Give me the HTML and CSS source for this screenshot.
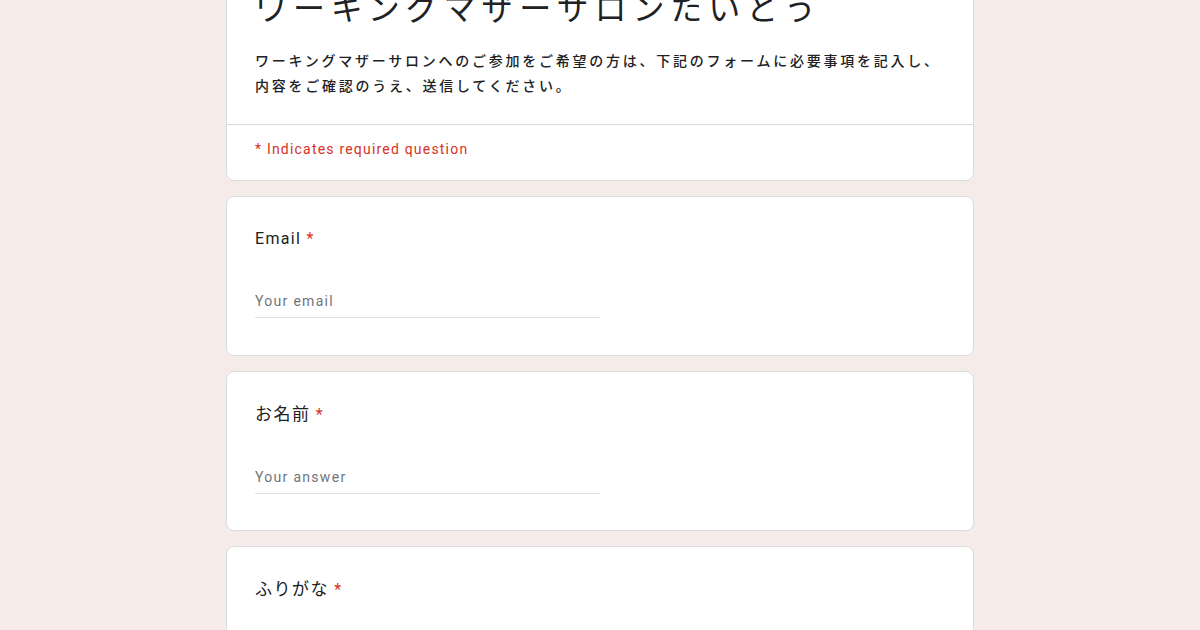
FILE: index.html
```html
<!DOCTYPE html>
<html lang="ja">
<head>
<meta charset="utf-8">
<title>ワーキングマザーサロンたいとう</title>
<link rel="stylesheet" href="styles.css">
</head>
<body>
<main class="form">
  <section class="card header-card">
    <div class="header-main">
      <h1 class="title">ワーキングマザーサロンたいとう</h1>
      <p class="desc">ワーキングマザーサロンへのご参加をご希望の方は、下記のフォームに必要事項を記入し、<br>内容をご確認のうえ、送信してください。</p>
    </div>
    <div class="required-note">* Indicates required question</div>
  </section>

  <section class="card question">
    <div class="q-label">Email <span class="star">*</span></div>
    <div class="q-input">Your email</div>
  </section>

  <section class="card question">
    <div class="q-label jp">お名前 <span class="star">*</span></div>
    <div class="q-input">Your answer</div>
  </section>

  <section class="card question">
    <div class="q-label jp">ふりがな <span class="star">*</span></div>
    <div class="q-input">Your answer</div>
  </section>
</main>
</body>
</html>
```

FILE: styles.css
```css
html, body {
  margin: 0;
  padding: 0;
}
body {
  background: #f5ebe8;
  font-family: Roboto, "Noto Sans CJK JP", sans-serif;
  color: #202124;
  overflow: hidden;
}
.form {
  width: 748px;
  margin: -39px auto 0;
  display: flex;
  flex-direction: column;
  gap: 15px;
}
.card {
  background: #fff;
  border: 1px solid #dadce0;
  border-radius: 8px;
  box-sizing: border-box;
}
.header-main {
  padding: 24px 28px 26px;
  border-bottom: 1px solid #dadce0;
}
.title {
  margin: 0;
  font-family: "Noto Sans CJK JP", sans-serif;
  font-weight: 400;
  font-size: 32px;
  line-height: 40px;
  letter-spacing: 5.9px;
  color: #202124;
}
.desc {
  margin: 22px 0 0;
  font-family: "Noto Sans CJK JP", sans-serif;
  font-size: 14px;
  font-weight: 500;
  line-height: 25px;
  letter-spacing: 2.75px;
  color: #202124;
}
.required-note {
  padding: 14px 28px 21px;
  font-size: 14px;
  line-height: 20px;
  letter-spacing: 1.2px;
  color: #d93025;
}
.question {
  padding: 30px 28px 36px;
  height: 160px;
}
.q-label {
  font-size: 16px;
  line-height: 24px;
  letter-spacing: 1.3px;
  color: #202124;
}
.q-label.jp {
  font-family: "Noto Sans CJK JP", sans-serif;
  font-size: 17px;
  letter-spacing: 1.5px;
  margin-top: -1px;
  margin-bottom: 1px;
}
.star {
  color: #d93025;
  font-family: Roboto, sans-serif;
  font-size: 16px;
}
.q-input {
  margin-top: 35px;
  width: 345px;
  height: 32px;
  box-sizing: border-box;
  border-bottom: 1px solid #e0e0e0;
  font-size: 14px;
  line-height: 30px;
  letter-spacing: 1.3px;
  color: #70757a;
}
```
